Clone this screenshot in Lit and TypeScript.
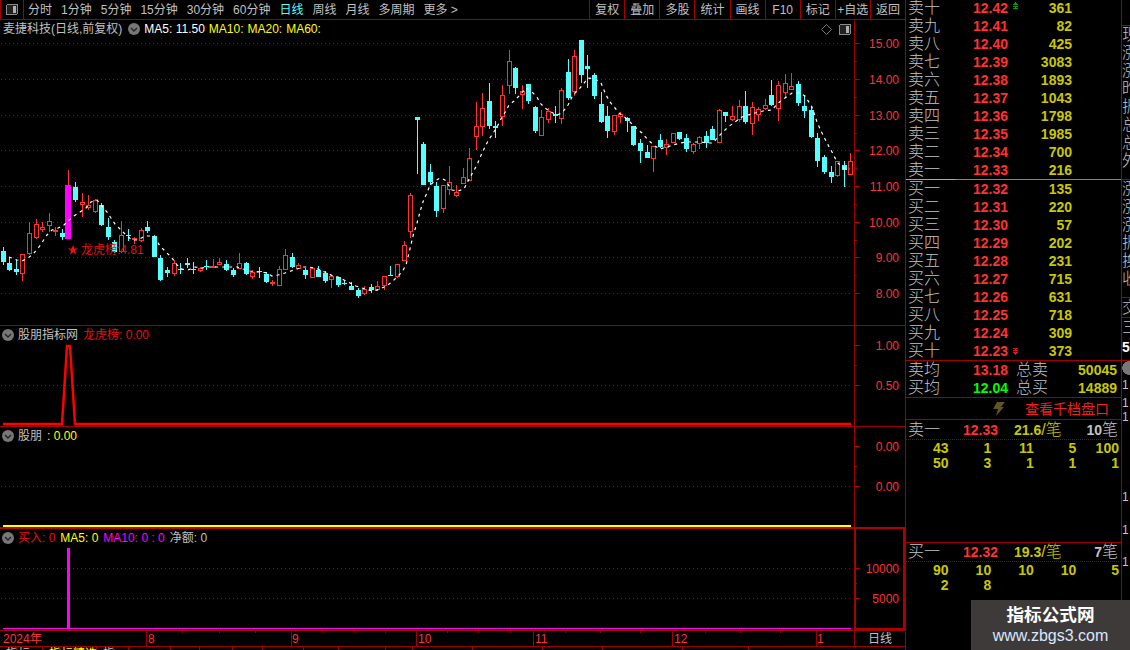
import { LitElement, html, css, svg } from "lit";
import { customElement } from "lit/decorators.js";

type C = [number, number, number, number, number, string];
const CANDLES: C[] = [
[3,247,251,262,265,"c"],[9,257,263,270,271,"c"],[16,260,269,272,275,"c"],[22,254,254,274,281,"r"],[29,222,233,254,255,"r"],[36,219,224,238,239,"r"],[42,222,227,230,232,"r"],[49,213,221,226,232,"r"],[55,227,230,231,236,"r"],[62,229,233,237,240,"c"],[68,170,185,239,239,"m"],[75,182,187,200,202,"c"],[82,193,202,205,217,"r"],[88,195,205,208,210,"r"],[95,199,200,212,213,"r"],[101,203,205,225,226,"c"],[108,218,227,237,240,"c"],[114,240,242,252,253,"c"],[121,221,235,252,253,"r"],[128,229,235,236,241,"c"],[134,237,238,240,244,"r"],[141,228,230,241,242,"r"],[147,221,227,231,233,"c"],[154,235,236,257,257,"c"],[160,255,258,280,281,"c"],[167,267,270,273,277,"c"],[174,260,263,274,276,"r"],[180,263,269,270,274,"c"],[187,258,263,265,268,"c"],[193,262,269,270,274,"c"],[200,267,268,271,272,"r"],[206,260,266,267,270,"c"],[213,259,266,268,268,"r"],[219,258,262,265,265,"r"],
[226,260,264,270,271,"c"],[233,268,270,275,277,"c"],[239,253,263,269,269,"r"],[246,262,263,274,275,"c"],[252,270,272,277,279,"r"],[259,267,271,272,278,"c"],[266,272,274,282,283,"c"],[272,280,282,283,286,"r"],[279,266,269,286,286,"r"],[285,249,255,270,270,"r"],[292,253,257,267,268,"c"],[298,263,265,269,269,"r"],[305,268,270,275,279,"c"],[312,268,268,278,278,"r"],[318,266,270,277,277,"c"],[325,271,273,281,283,"c"],[331,275,276,280,288,"r"],[338,277,277,285,287,"c"],[344,280,283,284,285,"c"],[351,282,286,290,290,"c"],[358,288,290,296,298,"c"],[364,286,289,294,295,"r"],[371,284,287,290,293,"c"],[377,281,286,290,291,"r"],[384,276,276,286,290,"r"],[390,266,275,276,276,"c"],[397,264,264,277,278,"r"],[404,241,245,261,261,"r"],[410,193,195,232,238,"r"],[417,117,117,120,174,"c"],
[423,142,144,185,185,"c"],[430,164,172,182,185,"c"],[436,182,186,211,217,"c"],[443,185,185,209,213,"r"],[449,166,182,190,195,"r"],[456,185,192,196,197,"r"],[463,168,177,184,184,"r"],[469,148,158,181,181,"r"],[476,102,126,137,150,"r"],[482,93,108,127,136,"r"],[489,83,101,126,129,"c"],[495,121,126,128,138,"c"],[502,85,95,117,126,"r"],[509,50,61,86,94,"r"],[515,67,68,88,94,"c"],[522,85,91,95,109,"r"],[528,84,84,101,104,"c"],[535,106,107,131,133,"c"],[541,110,117,136,136,"r"],[548,108,111,120,123,"r"],[555,106,114,116,123,"c"],[561,88,90,119,124,"r"],[568,59,72,98,100,"c"],[574,50,56,92,96,"r"],[581,40,40,75,83,"c"],[587,55,66,69,88,"c"],[594,73,75,96,99,"c"],[601,92,104,122,123,"c"],[607,106,116,131,138,"c"],[614,115,115,132,135,"r"],[620,112,114,117,123,"r"],
[627,117,118,121,132,"c"],[633,126,126,145,146,"c"],[640,139,143,151,163,"c"],[647,145,152,158,158,"c"],[653,146,146,159,172,"r"],[660,134,140,147,148,"c"],[666,139,144,148,155,"r"],[673,133,133,143,143,"r"],[679,132,132,139,140,"c"],[686,134,138,149,152,"c"],[693,143,144,152,154,"r"],[699,136,137,144,149,"r"],[706,131,136,143,148,"c"],[712,126,129,140,140,"c"],[719,109,110,143,143,"r"],[725,112,112,116,122,"c"],[732,106,116,120,121,"r"],[739,100,106,120,122,"r"],[745,91,106,122,124,"c"],[752,102,107,124,135,"r"],[758,107,109,115,121,"r"],[765,99,105,109,110,"r"],[771,80,95,105,106,"c"],[778,81,85,109,121,"r"],[785,74,83,93,97,"r"],[791,73,86,90,90,"r"],[798,81,84,103,106,"c"],[804,96,106,111,118,"c"],[811,107,110,137,138,"c"],[817,133,138,161,167,"c"],[824,155,157,172,174,"c"],[831,166,172,177,183,"c"],[837,161,161,176,177,"r"],[844,161,165,170,187,"c"],[850,153,161,175,175,"r"],
];
const MA = "9,257 17,260 22,261 28,258 33,254 39,247 43,241 47,235 52,230 58,228 63,226 68,221 74,216 80,212 86,208 91,202 97,200 101,205 107,212 111,218 115,224 120,229 126,235 132,240 138,240 145,236 151,236 155,238 160,246 166,252 172,258 177,265 182,269 188,270 195,267 202,268 208,267 217,267 223,267 230,267 237,267 243,269 250,271 255,272 261,272 267,273 272,276 278,275 285,273 291,271 297,269 303,267 308,267 315,268 320,270 327,273 333,276 338,277 344,280 350,283 356,286 362,288 368,290 374,291 380,289 386,286 392,282 397,277 402,272 406,265 409,253 413,236 417,223 420,212 422,205 424,199 427,193 430,185 435,181 440,178 445,180 452,190 458,191 464,189 467,183 473,172 477,165 482,153 485,147 488,141 492,135 497,127 502,117 506,111 509,105 514,101 520,95 526,88 532,92 537,97 540,103 545,108 551,112 557,115 562,113 568,105 573,95 580,88 585,82 588,78 595,79 601,83 606,95 610,102 615,108 619,113 627,119 635,127 642,133 648,140 655,146 660,149 667,147 673,145 680,143 687,142 693,142 700,142 707,143 713,143 718,137 723,132 728,127 735,122 742,117 748,115 755,113 763,111 772,110 778,103 785,98 792,93 800,93 805,96 812,107 817,122 822,133 827,143 832,152 837,162 843,168 850,169";

const RED = "#ff3232", CY = "#54ffff", MG = "#ff00ff";

function candle([x, hi, top, bot, lo, k]: C) {
  if (k === "c")
    return svg`<rect x=${x} y=${hi} width="1" height=${lo - hi} fill=${CY}/><rect x=${x - 2} y=${top} width="5" height=${Math.max(bot - top, 1)} fill=${CY}/>`;
  if (k === "m")
    return svg`<rect x=${x} y=${hi} width="1" height=${top - hi} fill=${RED}/><rect x=${x - 3} y=${top} width="6" height=${bot - top} fill=${MG}/>`;
  return svg`<rect x=${x} y=${hi} width="1" height=${lo - hi} fill=${RED}/><rect x=${x - 1.5} y=${top + 0.5} width="4" height=${Math.max(bot - top - 1, 1)} fill="#000" stroke=${RED}/>`;
}
function grid(ys: number[]) {
  return ys.map((y) => svg`<line x1="1" x2="851" y1=${y + 0.5} y2=${y + 0.5} stroke="#b00000" stroke-dasharray="1 3"/>`);
}
function axis(top: number, h: number, major: [number, string][], minor: number[]) {
  return html`<svg class="axis" width="50" height=${h} viewBox="855 ${top} 50 ${h}" shape-rendering="crispEdges">
    ${major.map(([y, t]) => svg`<rect x="855" y=${y} width="5" height="1" fill="#b00000"/><text x="899" y=${y + 5} text-anchor="end" fill=${RED}>${t}</text>`)}
    ${minor.map((y) => svg`<rect x="855" y=${y} width="2" height="1" fill="#b00000"/>`)}
  </svg>`;
}
const chev = html`<svg class="chev" width="12" height="12" viewBox="0 0 12 12"><circle cx="6" cy="6" r="6" fill="#777"/><path d="M3 5l3 3 3-3" fill="none" stroke="#222" stroke-width="1.4"/></svg>`;
const winIcon = html`<svg width="12" height="11" viewBox="0 0 12 11" shape-rendering="crispEdges"><rect x=".5" y=".5" width="11" height="10" rx="1.5" fill="#222" stroke="#8a8a8a"/><rect x="7" y="2" width="3" height="7" fill="#b0b0b0"/></svg>`;
const upMark = html`<svg class="mk up" width="7" height="7" viewBox="0 0 7 7" shape-rendering="crispEdges"><path d="M3 0h1v1h1v1h1v1H1V2h1V1h1zM1 4h5v1H4v1h2v1H1V6h2V5H1z" fill="#00a000"/></svg>`;
const downMark = html`<svg class="mk down" width="7" height="7" viewBox="0 0 7 7" shape-rendering="crispEdges"><path d="M1 0h5v1H4v1h2v1H1V2h2V1H1zM1 4h5v1H5v1H4v1H3V6H2V5H1z" fill="#f01010"/></svg>`;

const SELL = [["卖十","12.42","361"],["卖九","12.41","82"],["卖八","12.40","425"],["卖七","12.39","3083"],["卖六","12.38","1893"],["卖五","12.37","1043"],["卖四","12.36","1798"],["卖三","12.35","1985"],["卖二","12.34","700"],["卖一","12.33","216"]];
const BUY = [["买一","12.32","135"],["买二","12.31","220"],["买三","12.30","57"],["买四","12.29","202"],["买五","12.28","231"],["买六","12.27","715"],["买七","12.26","631"],["买八","12.25","718"],["买九","12.24","309"],["买十","12.23","373"]];
const STRIP: [number, string, string][] = [
  [26, "", "b"], [18, "现", ""], [18, "涨", ""], [18, "涨", ""], [18, "昨", ""], [18, "振", ""], [18, "总", ""], [18, "总", ""], [18, "外", ""], [10, "", "b"],
  [18, "涨", ""], [18, "涨", ""], [18, "涨", ""], [18, "振", ""], [18, "换", ""], [18, "收", ""], [10, "", "b"],
  [20, "交", "b"], [19, "三", ""], [19, "5", "w"], [5, "", "b"], [14, "", "c"], [20, "1", "n"], [16, "1", "n"], [12, "1", "n"], [68, "", ""], [12, "1", "n"], [21, "", ""], [12, "1", "n"], [20, "", ""], [12, "1", "n"],
];

@customElement("app-root")
export class AppRoot extends LitElement {
  static styles = css`
    :host { display: block; width: 1130px; height: 650px; }
    * { box-sizing: border-box; }
    .root { position: relative; display: flex; width: 1130px; height: 650px; overflow: hidden; background: #000; color: #c0c0c0;
      font: 12px/1 "Liberation Sans", "Noto Sans CJK SC", sans-serif; }
    svg { display: block; }
    svg text { font-size: 12px; }
    .main { width: 905px; flex: none; display: flex; flex-direction: column; }
    .toolbar { height: 20px; display: flex; align-items: center; border-bottom: 1px solid #a00000; flex: none; }
    .tbicon { width: 24px; height: 19px; border-right: 1px solid #a00000; border-left: 1px solid #a00000; display: flex; align-items: center; justify-content: center; }
    .tabs { display: flex; gap: 9px; margin-left: 4px; }
    .tabs .on { color: #54ffff; }
    .btns { margin-left: auto; display: flex; height: 19px; }
    .btns span { width: 35.1px; border-left: 1px solid #a00000; display: flex; align-items: center; justify-content: center; white-space: nowrap; }
    .pane { display: flex; flex: none; border-bottom: 1px solid #a00000; }
    .p1 { height: 306px; } .p2 { height: 101px; }
    .p3 { height: 102px; border-bottom: 2px solid #b00000; } .p4 { height: 102px; }
    .plot { position: relative; width: 855px; flex: none; border-right: 1px solid #a00000; }
    .axis { flex: none; }
    .p4 .axwrap { border: 2px solid #b00000; border-top: 0; border-left-width: 1px; width: 50px; }
    .p4 .axwrap svg { margin-left: -1px; }
    .legend { position: absolute; left: 2px; top: 3px; display: flex; align-items: center; white-space: nowrap; height: 12px; }
    .legend.first { left: 3px; }
    .legend .chev { margin-right: 4px; }
    .r { color: #e81010; } .y { color: #ffff00; } .m { color: #ff00ff; } .w { color: #fff; }
    .ml4 { margin-left: 4px; } .ml5 { margin-left: 5px; } .ml6 { margin-left: 6px; }
    .tools { position: absolute; right: 3px; top: 4px; display: flex; gap: 7px; align-items: center; }
    .star { position: absolute; left: 68px; top: 223px; display: flex; align-items: center; gap: 3px; color: #e81010; white-space: nowrap; height: 14px; font-size: 12px; }
    .dates { display: flex; height: 16px; flex: none; border-bottom: 1px solid #a00000; }
    .dates .cell { flex: 1; border-left: 1px solid #a00000; display: flex; align-items: center; justify-content: center; font-size: 12px; }
    .bottom { display: flex; height: 3px; overflow: hidden; flex: none; }
    .bottom span { border-right: 1px solid #a00000; padding: 1px 0 0 6px; line-height: 12px; white-space: nowrap; flex: none; height: 3px; }
    .bottom .yl { color: #ffff00; }

    .panel { width: 217px; flex: none; border-left: 1px solid #a00000; border-right: 1px solid #a00000; display: flex; flex-direction: column; }
    .levels { margin-top: -1px; }
    .row { position: relative; display: grid; grid-template-columns: 65px 42px 57px; height: 18px; align-items: center; padding-left: 2px; }
    .mk { position: absolute; left: 106px; }
    .mk.up { top: 3px; } .mk.down { top: 6px; }
    .lbl { font-size: 16px; color: #c4c4c4; font-weight: 300; white-space: nowrap; }
    .num { font-size: 14px; font-weight: 700; }
    .px { color: #ff3232; }
    .qty { color: #c8c800; text-align: right; }
    .divider { height: 1px; flex: none; background: linear-gradient(90deg, #d8a050 0, #d8a050 50px, #5090d0 50px); }
    .sec-end { border-bottom: 1px solid #a00000; }
    .sum { display: grid; grid-template-columns: 65px 43px 60px 41px; height: 18px; align-items: center; padding-left: 2px; }
    .g { color: #00ff00; }
    .go { height: 22px; display: flex; align-items: center; border-bottom: 1px solid #a00000; color: #f02020; font-size: 14px; padding-left: 87px; gap: 20px; flex: none; }
    .head { display: grid; grid-template-columns: 55px 51px 72px 32px; align-items: center; height: 20px; padding-left: 2px; border-bottom: 1px dotted #a00000; margin: 0 2px 0 0; white-space: nowrap; flex: none; }
    .head.b2 { height: 19px; }
    .head .yb { color: #c8c800; }
    .head .yb i { font-style: normal; font-size: 16px; font-weight: 300; }
    .head .end { text-align: right; color: #c4c4c4; white-space: nowrap; }
    .head .end i { font-style: normal; font-size: 16px; font-weight: 300; }
    .qrow { display: grid; grid-template-columns: repeat(5, 42.6px); height: 15px; align-items: center; flex: none; }
    .qrow span { text-align: right; color: #c8c800; font-size: 14px; font-weight: 700; }
    .qbox { flex: none; }
    .detail { height: 123px; flex: none; border-bottom: 1px solid #a00000; }
    .strip { width: 8px; flex: none; display: flex; flex-direction: column; overflow: hidden; }
    .strip div { flex: none; font-size: 16px; font-weight: 300; display: flex; align-items: center; white-space: nowrap; overflow: hidden; color: #c4c4c4; }
    .strip .b { border-bottom: 1px solid #a00000; }
    .strip .w { color: #fff; font-size: 14px; font-weight: 700; }
    .strip .n { font-size: 12px; }
    .strip .c { background: radial-gradient(circle at 7px 7px, #777 6.5px, transparent 7px); }
    .mark-w { position: absolute; left: 971px; top: 600px; width: 159px; height: 50px; background: #3f3a3a; display: flex; flex-direction: column; align-items: center; }
    .mark-w .t { color: #fff; font-size: 17.6px; font-weight: 700; line-height: 20px; margin-top: 5px; }
    .mark-w .u { color: #d8e8ff; font-size: 16px; line-height: 18px; margin-top: 2px; }
  `;

  render() {
    const tabs = ["分时", "1分钟", "5分钟", "15分钟", "30分钟", "60分钟", "日线", "周线", "月线", "多周期", "更多 >"];
    const btns = ["复权", "叠加", "多股", "统计", "画线", "F10", "标记", "+自选", "返回"];
    return html`<div class="root">
      <div class="main">
        <div class="toolbar">
          <div class="tbicon">${winIcon}</div>
          <div class="tabs">${tabs.map((t) => html`<span class=${t === "日线" ? "on" : ""}>${t}</span>`)}</div>
          <div class="btns">${btns.map((t) => html`<span>${t}</span>`)}</div>
        </div>

        <div class="pane p1">
          <div class="plot">
            <svg width="854" height="305" viewBox="0 20 854 305" shape-rendering="crispEdges">
              ${grid([43, 79, 115, 150, 186, 222, 257, 293])}
              ${CANDLES.map(candle)}
              <polyline points=${MA} fill="none" stroke="#fff" stroke-width="1.2" stroke-dasharray="3 4" shape-rendering="auto"/>
            </svg>
            <div class="legend first"><span>麦捷科技(日线,前复权)</span><span class="ml6">${chev}</span><span class="w">MA5: 11.50</span><span class="y ml4">MA10:</span><span class="y ml4">MA20:</span><span class="y ml4">MA60:</span></div>
            <div class="tools">
              <svg width="11" height="11" viewBox="0 0 11 11"><path d="M5.5 .5l5 5-5 5-5-5z" fill="none" stroke="#777"/></svg>
              ${winIcon}
            </div>
            <div class="star">
              <svg width="10" height="10" viewBox="0 0 10 10"><path d="M5 0l1.3 3.4H10L7 5.7 8.1 9.5 5 7.3 1.9 9.5 3 5.7 0 3.4h3.7z" fill="#f01010"/></svg>
              <span>龙虎榜:4.81</span>
            </div>
          </div>
          ${axis(20, 305, [[43, "15.00"], [79, "14.00"], [115, "13.00"], [150, "12.00"], [186, "11.00"], [222, "10.00"], [257, "9.00"], [293, "8.00"]], [61, 97, 133, 168, 204, 240, 275])}
        </div>

        <div class="pane p2">
          <div class="plot">
            <svg width="854" height="100" viewBox="0 326 854 100">
              ${grid([385])}
              <polyline points="3,424 62,424 67,346 70,346 75,424 851,424" fill="none" stroke="#ff0000" stroke-width="2.5"/>
            </svg>
            <div class="legend"><span>${chev}</span><span>股朋指标网</span><span class="r ml5">龙虎榜: 0.00</span></div>
          </div>
          ${axis(326, 100, [[345, "1.00"], [385, "0.50"]], [365])}
        </div>

        <div class="pane p3">
          <div class="plot">
            <svg width="854" height="100" viewBox="0 427 854 100" shape-rendering="crispEdges">
              ${grid([486])}
              <rect x="3" y="525" width="848" height="2" fill="#ffff00"/>
            </svg>
            <div class="legend"><span>${chev}</span><span>股朋</span><span class="y ml5">: 0.00</span></div>
          </div>
          ${axis(427, 100, [[446, "0.00"], [486, "0.00"]], [466])}
        </div>

        <div class="pane p4">
          <div class="plot">
            <svg width="854" height="101" viewBox="0 529 854 101" shape-rendering="crispEdges">
              ${grid([568, 598])}
              <rect x="67" y="548" width="3" height="80" fill=${MG}/>
              <rect x="3" y="628" width="848" height="1" fill=${MG}/>
            </svg>
            <div class="legend"><span>${chev}</span><span class="r">买入: 0</span><span class="y ml5">MA5: 0</span><span class="m ml5">MA10: 0 : 0</span><span class="ml5">净额: 0</span></div>
          </div>
          <div class="axwrap">${axis(529, 99, [[568, "10000"], [598, "5000"]], [583])}</div>
        </div>

        <div class="dates">
          <svg width="854" height="15" viewBox="0 631 854 15" shape-rendering="crispEdges">
            ${[146, 291, 416, 533, 672, 816].map((x) => svg`<rect x=${x} y="631" width="1" height="15" fill="#a00000"/>`)}
            ${[182, 219, 255, 322, 354, 385, 447, 478, 510, 565, 600, 640, 705, 740, 780].map((x) => svg`<rect x=${x} y="631" width="1" height="2" fill="#a00000"/>`)}
            <text x="3" y="643" fill=${RED}>2024年</text>
            <text x="148" y="643" fill=${RED}>8</text>
            <text x="292" y="643" fill=${RED}>9</text>
            <text x="418" y="643" fill=${RED}>10</text>
            <text x="535" y="643" fill=${RED}>11</text>
            <text x="674" y="643" fill=${RED}>12</text>
            <text x="817" y="643" fill=${RED}>1</text>
          </svg>
          <div class="cell">日线</div>
        </div>
        <div class="bottom">
          <span style="width:43px">指标</span><span class="yl" style="width:54px">指标精选</span><span style="width:32px">指</span>
          ${[42, 29, 33, 30, 41, 35, 47, 27, 60, 70, 60, 80, 66].map((w) => html`<span style="width:${w}px"></span>`)}
        </div>
      </div>

      <div class="panel">
        <div class="levels">
          ${SELL.map((r, i) => html`<div class="row"><span class="lbl">${r[0]}</span><span class="num px">${r[1]}</span><span class="num qty">${r[2]}</span>${i === 0 ? upMark : ""}</div>`)}
        </div>
        <div class="divider"></div>
        <div class="sec-end">
          ${BUY.map((r, i) => html`<div class="row"><span class="lbl">${r[0]}</span><span class="num px">${r[1]}</span><span class="num qty">${r[2]}</span>${i === 9 ? downMark : ""}</div>`)}
        </div>
        <div class="sec-end">
          <div class="sum"><span class="lbl">卖均</span><span class="num px">13.18</span><span class="lbl">总卖</span><span class="num qty">50045</span></div>
          <div class="sum"><span class="lbl">买均</span><span class="num g">12.04</span><span class="lbl">总买</span><span class="num qty">14889</span></div>
        </div>
        <div class="go">
          <svg width="12" height="14" viewBox="0 0 12 14"><path d="M4 0h8L8 5h3L3 14l2-7H0z" fill="#5e5424"/></svg>
          <span>查看千档盘口</span>
        </div>
        <div class="detail">
          <div class="head"><span class="lbl">卖一</span><span class="num px">12.33</span><span class="num yb">21.6<i>/笔</i></span><span class="num end">10<i>笔</i></span></div>
          <div class="qbox">
            <div class="qrow">${["43", "1", "11", "5", "100"].map((t) => html`<span>${t}</span>`)}</div>
            <div class="qrow">${["50", "3", "1", "1", "1"].map((t) => html`<span>${t}</span>`)}</div>
          </div>
        </div>
        <div class="head b2"><span class="lbl">买一</span><span class="num px">12.32</span><span class="num yb">19.3<i>/笔</i></span><span class="num end">7<i>笔</i></span></div>
        <div class="qbox">
          <div class="qrow">${["90", "10", "10", "10", "5"].map((t) => html`<span>${t}</span>`)}</div>
          <div class="qrow">${["2", "8", "", "", ""].map((t) => html`<span>${t}</span>`)}</div>
        </div>
      </div>

      <div class="strip">
        ${STRIP.map(([h, t, k]) => html`<div class=${k} style="height:${h}px">${t}</div>`)}
      </div>
      <div class="mark-w"><div class="t">指标公式网</div><div class="u">www.zbgs3.com</div></div>
    </div>`;
  }
}
